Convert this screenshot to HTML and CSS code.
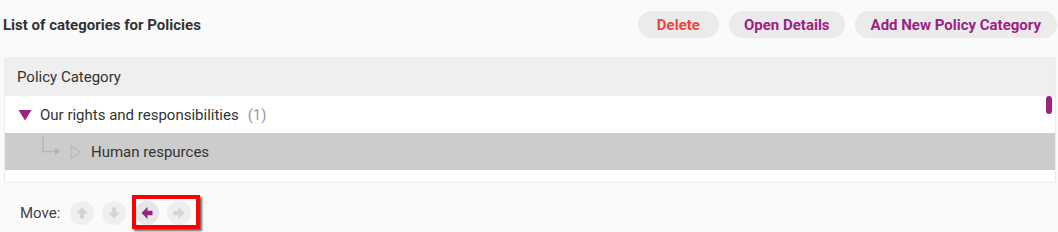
FILE: index.html
```html
<!DOCTYPE html>
<html>
<head>
<meta charset="utf-8">
<link rel="stylesheet" href="styles.css">
</head>
<body>
<div class="page">
  <div class="toolbar">
    <div class="title">List of categories for Policies</div>
    <div class="actions">
      <button class="btn btn-danger">Delete</button>
      <button class="btn btn-open">Open Details</button>
      <button class="btn">Add New Policy Category</button>
    </div>
  </div>
  <div class="table">
    <div class="thead">Policy Category</div>
    <div class="tbody">
      <div class="row">
        <svg class="caret" width="14" height="12" viewBox="0 0 14 12"><polygon points="0.5,1 13.5,1 7,11.5" fill="#9b2281"/></svg>
        <span class="name">Our rights and responsibilities</span>
        <span class="count">(1)</span>
      </div>
      <div class="row row-selected">
        <svg class="elbow" width="22" height="37" viewBox="0 0 22 37"><path d="M2 3 V18.5 H15" fill="none" stroke="#b4b4b4" stroke-width="1.5"/><polygon points="14,15 19.5,18.5 14,22" fill="#b4b4b4"/></svg>
        <svg class="caret-hollow" width="12" height="14" viewBox="0 0 12 14"><polygon points="1,1 11,7 1,13" fill="none" stroke="#b8b8b8" stroke-width="1.2"/></svg>
        <span class="name">Human respurces</span>
      </div>
      <div class="filler"></div>
      <div class="scroll-thumb"></div>
    </div>
  </div>
  <div class="move">
    <span class="move-label">Move:</span>
    <span class="mbtn"><svg width="14" height="14" viewBox="0 0 14 14"><path d="M7 1.5 L13 7.5 H9.2 V12.5 H4.8 V7.5 H1 Z" fill="#d4d4d4"/></svg></span>
    <span class="mbtn"><svg width="14" height="14" viewBox="0 0 14 14"><path d="M7 12.5 L13 6.5 H9.2 V1.5 H4.8 V6.5 H1 Z" fill="#d4d4d4"/></svg></span>
    <span class="mbtn mbtn-left"><svg width="14" height="14" viewBox="0 0 14 14"><path d="M1.5 7 L7.5 1 V4.8 H12.5 V9.2 H7.5 V13 Z" fill="#9b2281"/></svg></span>
    <span class="mbtn"><svg width="14" height="14" viewBox="0 0 14 14"><path d="M12.5 7 L6.5 1 V4.8 H1.5 V9.2 H6.5 V13 Z" fill="#d4d4d4"/></svg></span>
    <div class="highlight"></div>
  </div>
</div>
</body>
</html>
```

FILE: styles.css
```css
html, body {
  margin: 0;
  padding: 0;
  background: #fafafa;
  font-family: Roboto, "Liberation Sans", sans-serif;
  color: #333;
}
.page {
  width: 1058px;
  height: 232px;
  position: relative;
  overflow: hidden;
}
.toolbar {
  display: flex;
  align-items: center;
  justify-content: space-between;
  padding: 11px 1px 0 3px;
  height: 27px;
}
.title {
  font-size: 15px;
  font-weight: 700;
  color: #333;
}
.actions {
  display: flex;
  gap: 10px;
}
.btn {
  height: 27px;
  border: none;
  border-radius: 14px;
  background: #ebebeb;
  color: #9b2281;
  font-family: Roboto, "Liberation Sans", sans-serif;
  font-size: 15px;
  font-weight: 700;
  padding: 0 16px;
  cursor: pointer;
}
.btn-danger {
  color: #f4433c;
  padding: 0 19px;
}
.btn-open {
  padding: 0 15px;
}
.table {
  margin: 19px 2px 0 4px;
  border: 1px solid #ececec;
  border-top: none;
  background: #fff;
}
.thead {
  height: 39px;
  background: #efefef;
  display: flex;
  align-items: center;
  padding-left: 12px;
  font-size: 15px;
  color: #333;
}
.tbody {
  position: relative;
}
.row {
  height: 37px;
  display: flex;
  align-items: center;
  font-size: 15px;
  color: #333;
  padding-left: 13px;
}
.caret {
  margin-right: 8px;
  margin-top: 1px;
}
.count {
  color: #999;
  margin-left: 9px;
}
.row-selected {
  background: #cccccc;
  padding-left: 36px;
}
.elbow {
  margin-right: 7px;
}
.caret-hollow {
  margin-right: 9px;
  margin-top: 1px;
}
.filler {
  height: 12px;
}
.scroll-thumb {
  position: absolute;
  right: 3px;
  top: 0;
  width: 6px;
  height: 18px;
  border-radius: 3px;
  background: #9b2281;
}
.move {
  position: relative;
  display: flex;
  align-items: center;
  gap: 8px;
  padding: 18px 0 0 20px;
  height: 24px;
}
.move-label {
  font-size: 15px;
  color: #444;
  margin-right: 2px;
}
.mbtn {
  width: 24px;
  height: 24px;
  border-radius: 50%;
  background: #efefef;
  display: flex;
  align-items: center;
  justify-content: center;
}
.mbtn-left {
  margin-left: 1px;
  background: #e6e6e6;
}
.highlight {
  position: absolute;
  left: 132px;
  top: 12px;
  width: 60px;
  height: 26px;
  border: 4px solid #ff0000;
  box-shadow: 2px 2px 2px rgba(0,0,0,0.6);
}
```
